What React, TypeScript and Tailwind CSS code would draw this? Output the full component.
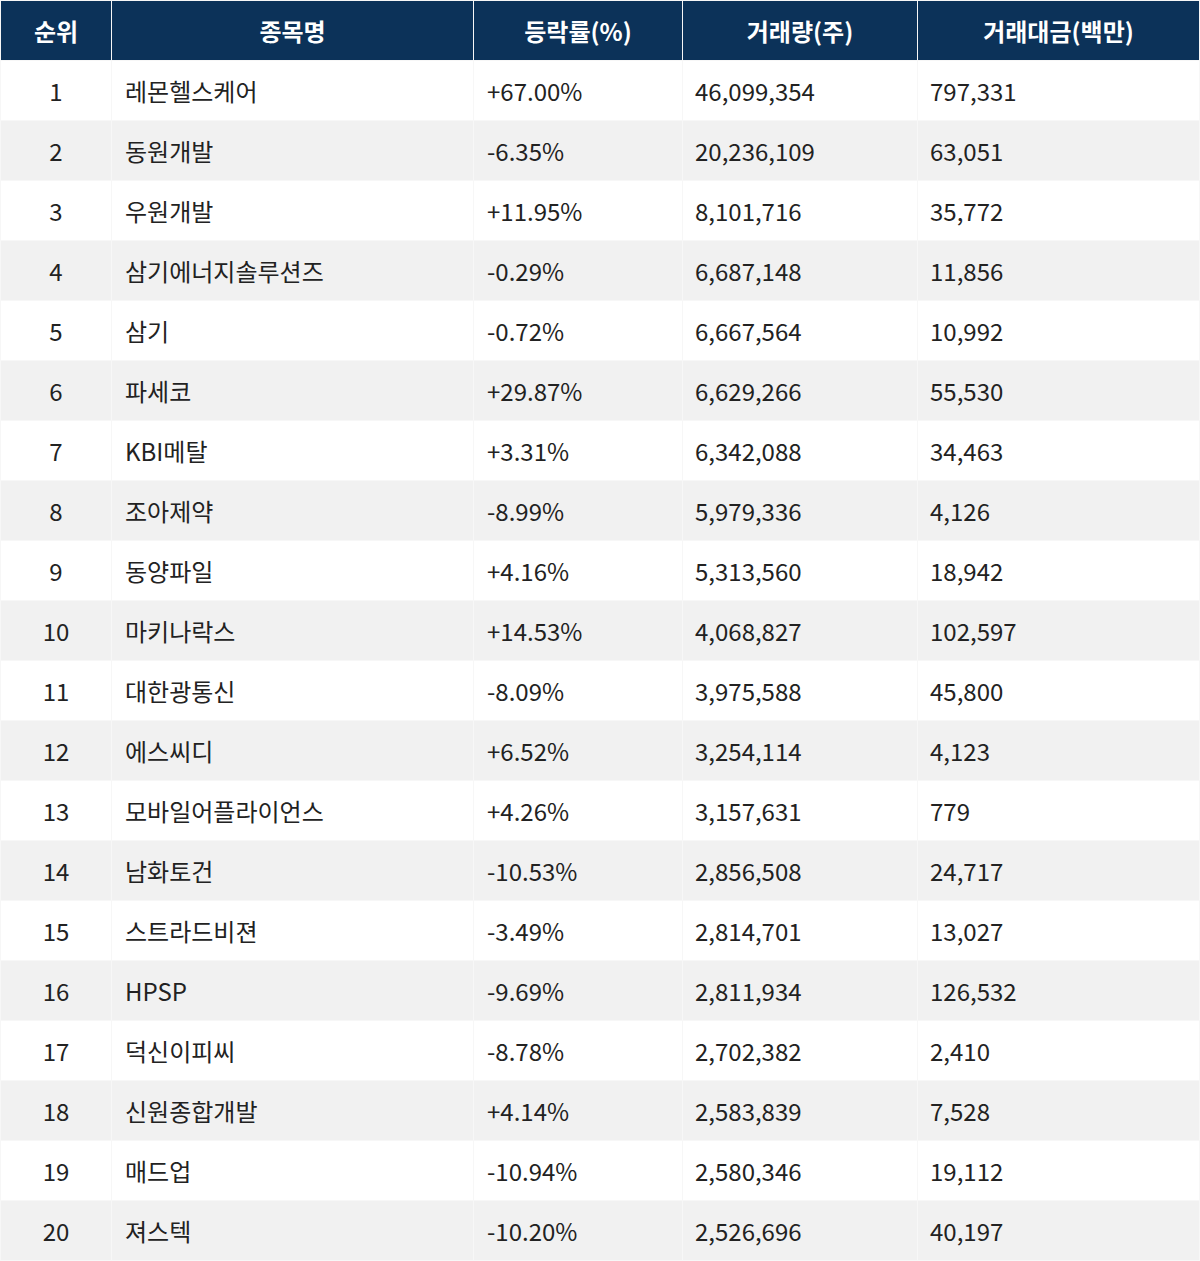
const rows = [
  ["1", "레몬헬스케어", "+67.00%", "46,099,354", "797,331"],
  ["2", "동원개발", "-6.35%", "20,236,109", "63,051"],
  ["3", "우원개발", "+11.95%", "8,101,716", "35,772"],
  ["4", "삼기에너지솔루션즈", "-0.29%", "6,687,148", "11,856"],
  ["5", "삼기", "-0.72%", "6,667,564", "10,992"],
  ["6", "파세코", "+29.87%", "6,629,266", "55,530"],
  ["7", "KBI메탈", "+3.31%", "6,342,088", "34,463"],
  ["8", "조아제약", "-8.99%", "5,979,336", "4,126"],
  ["9", "동양파일", "+4.16%", "5,313,560", "18,942"],
  ["10", "마키나락스", "+14.53%", "4,068,827", "102,597"],
  ["11", "대한광통신", "-8.09%", "3,975,588", "45,800"],
  ["12", "에스씨디", "+6.52%", "3,254,114", "4,123"],
  ["13", "모바일어플라이언스", "+4.26%", "3,157,631", "779"],
  ["14", "남화토건", "-10.53%", "2,856,508", "24,717"],
  ["15", "스트라드비젼", "-3.49%", "2,814,701", "13,027"],
  ["16", "HPSP", "-9.69%", "2,811,934", "126,532"],
  ["17", "덕신이피씨", "-8.78%", "2,702,382", "2,410"],
  ["18", "신원종합개발", "+4.14%", "2,583,839", "7,528"],
  ["19", "매드업", "-10.94%", "2,580,346", "19,112"],
  ["20", "져스텍", "-10.20%", "2,526,696", "40,197"],
];

const headers = ["순위", "종목명", "등락률(%)", "거래량(주)", "거래대금(백만)"];

export default function App() {
  return (
    <div className="w-[1200px] bg-white font-['Noto_Sans_CJK_KR','Noto_Sans',sans-serif] text-[#222]">
      <table className="w-[1200px] table-fixed border-separate border-spacing-[1px] bg-[#f7f7f7]">
        <colgroup>
          <col className="w-[110px]" />
          <col className="w-[361px]" />
          <col className="w-[208px]" />
          <col className="w-[234px]" />
          <col className="w-[281px]" />
        </colgroup>
        <thead>
          <tr>
            {headers.map((h) => (
              <th
                key={h}
                className="h-[59px] bg-[#0c3259] p-0 text-center text-[24px] font-bold text-white"
              >
                {h}
              </th>
            ))}
          </tr>
        </thead>
        <tbody>
          {rows.map((r, i) => (
            <tr key={r[0]} className={i % 2 === 0 ? "bg-white" : "bg-[#f1f1f1]"}>
              <td className="h-[59px] p-0 text-center text-[24px]">{r[0]}</td>
              <td className="h-[59px] py-0 pl-[13px] text-[24px]">{r[1]}</td>
              <td className="h-[59px] py-0 pl-[13px] text-[24px]">{r[2]}</td>
              <td className="h-[59px] py-0 pl-[12px] text-[24px]">{r[3]}</td>
              <td className="h-[59px] py-0 pl-[12px] text-[24px]">{r[4]}</td>
            </tr>
          ))}
        </tbody>
      </table>
    </div>
  );
}
